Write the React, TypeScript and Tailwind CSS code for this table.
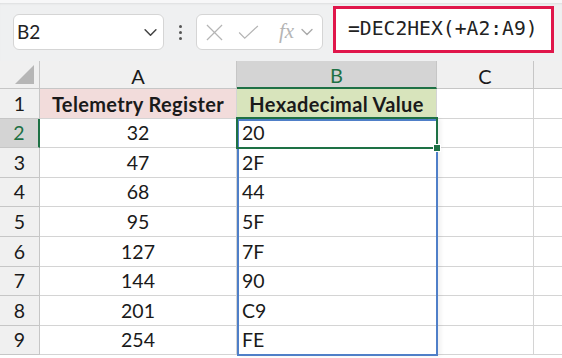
import React from "react";

const rows = [
  { n: 1, a: "Telemetry Register", b: "Hexadecimal Value", h: 30 },
  { n: 2, a: "32", b: "20", h: 29 },
  { n: 3, a: "47", b: "2F", h: 30 },
  { n: 4, a: "68", b: "44", h: 29 },
  { n: 5, a: "95", b: "5F", h: 30 },
  { n: 6, a: "127", b: "7F", h: 30 },
  { n: 7, a: "144", b: "90", h: 29 },
  { n: 8, a: "201", b: "C9", h: 30 },
  { n: 9, a: "254", b: "FE", h: 29 },
];

function Chevron({ className }: { className?: string }) {
  return (
    <svg viewBox="0 0 12 8" className={className} fill="none" stroke="currentColor" strokeWidth={1.4}>
      <path d="M1 1.5l5 5 5-5" strokeLinecap="round" strokeLinejoin="round" />
    </svg>
  );
}

function Toolbar() {
  return (
    <div className="h-[61px] bg-[#eff0f1] flex items-center border-t-[3px] border-[#f7f7f8] shadow-[inset_0_2px_3px_-2px_rgba(0,0,0,0.15)]">
      <div className="ml-[13px] w-[151px] h-[36px] bg-white border border-[#d5d5d5] rounded-[6px] flex items-center justify-between pl-[3px] pr-[6px]">
        <span className="text-[19px] text-[#222]">B2</span>
        <Chevron className="w-[13px] h-[9px] text-[#444]" />
      </div>
      <div className="w-[32px] flex flex-col items-center gap-[3px]">
        <div className="w-[3px] h-[3px] rounded-full bg-[#555]" />
        <div className="w-[3px] h-[3px] rounded-full bg-[#555]" />
        <div className="w-[3px] h-[3px] rounded-full bg-[#555]" />
      </div>
      <div className="w-[127px] h-[36px] bg-white border border-[#d5d5d5] rounded-[6px] flex items-center pl-[9px] text-[#b5b5b5]">
        <svg viewBox="0 0 18 18" className="w-[17px] h-[17px]" fill="none" stroke="currentColor" strokeWidth={1.3}>
          <path d="M1 1l16 16M17 1L1 17" />
        </svg>
        <svg viewBox="0 0 22 16" className="ml-[15px] w-[21px] h-[15px]" fill="none" stroke="currentColor" strokeWidth={1.3}>
          <path d="M1 8l6 6L21 1" />
        </svg>
        <span className="ml-[20px] italic text-[21px] leading-none font-['Liberation_Serif',serif] -mt-[2px]">fx</span>
        <Chevron className="ml-[7px] w-[12px] h-[8px] text-[#aaa]" />
      </div>
      <div className="ml-[10px] w-[221px] h-[47px] bg-white border-[3px] border-[#e0164b] flex items-center pl-[12px] -mt-[6px]">
        <span className="text-[19.7px] text-[#222] font-['DejaVu_Sans_Mono',monospace]">=DEC2HEX(+A2:A9)</span>
      </div>
    </div>
  );
}

export default function App() {
  return (
    <div className="w-[562px] h-[358px] overflow-hidden bg-white font-['Lato','Noto_Sans',sans-serif] text-[#1a1a1a]">
      <Toolbar />
      {/* column headers */}
      <div className="h-[28px] flex bg-[#f0f0f0] text-[20px]">
        <div className="w-[40px] shrink-0 border-r border-b border-[#c6c6c6] relative">
          <div className="absolute right-[5px] bottom-[4px] w-0 h-0 border-l-[19px] border-l-transparent border-b-[19px] border-b-[#b6b6b6]" />
        </div>
        <div className="w-[197px] shrink-0 border-r border-b border-[#c6c6c6] flex items-center justify-center pt-[2px]">A</div>
        <div className="w-[200px] shrink-0 bg-[#d4d4d4] border-r border-[#c6c6c6] border-b-2 border-b-[#1e7145] flex items-center justify-center text-[#1e7145] pt-[2px]">
          B
        </div>
        <div className="w-[97px] shrink-0 border-r border-b border-[#c6c6c6] flex items-center justify-center pt-[2px]">C</div>
        <div className="flex-1 border-b border-[#c6c6c6]" />
      </div>
      {/* rows */}
      <div className="relative">
        {rows.map((r) => {
          const sel = r.n === 2;
          const head = r.n === 1;
          return (
            <div key={r.n} className="flex text-[19.5px]" style={{ height: r.h }}>
              <div
                className={
                  sel
                    ? "w-[40px] shrink-0 bg-[#d4d4d4] border-r-2 border-r-[#1e7145] border-b border-b-[#c6c6c6] flex items-center justify-center text-[#1e7145]"
                    : "w-[40px] shrink-0 bg-[#f0f0f0] border-r border-b border-[#c6c6c6] flex items-center justify-center"
                }
              >
                {r.n}
              </div>
              <div
                className={
                  head
                    ? "w-[197px] shrink-0 bg-[#f2dcdb] border-r border-b border-[#d4d4d4] flex items-center justify-center font-bold text-[20px] tracking-[0.35px]"
                    : "w-[197px] shrink-0 border-r border-b border-[#d4d4d4] flex items-center justify-center"
                }
              >
                {r.a}
              </div>
              <div
                className={
                  head
                    ? "w-[200px] shrink-0 bg-[#d8e4bc] border-r border-b border-[#d4d4d4] flex items-center justify-center font-bold text-[20px] tracking-[0.35px]"
                    : "w-[200px] shrink-0 border-r border-b border-[#d4d4d4] flex items-center pl-[5px]"
                }
              >
                {r.b}
              </div>
              <div className="w-[97px] shrink-0 border-r border-b border-[#d4d4d4]" />
              <div className="flex-1 border-b border-[#d4d4d4]" />
            </div>
          );
        })}
        {/* spill range outline B2:B9 */}
        <div className="absolute left-[237px] top-[30px] w-[201px] h-[237px] border-2 border-[#4f7fc8] shadow-[3px_0_4px_rgba(0,0,0,0.06)] pointer-events-none" />
        {/* active cell B2 */}
        <div className="absolute left-[236px] top-[28px] w-[202px] h-[32px] border-2 border-[#1e7145] pointer-events-none" />
        <div className="absolute left-[433px] top-[55px] w-[8px] h-[8px] bg-[#1e7145] border border-white" />
      </div>
    </div>
  );
}
